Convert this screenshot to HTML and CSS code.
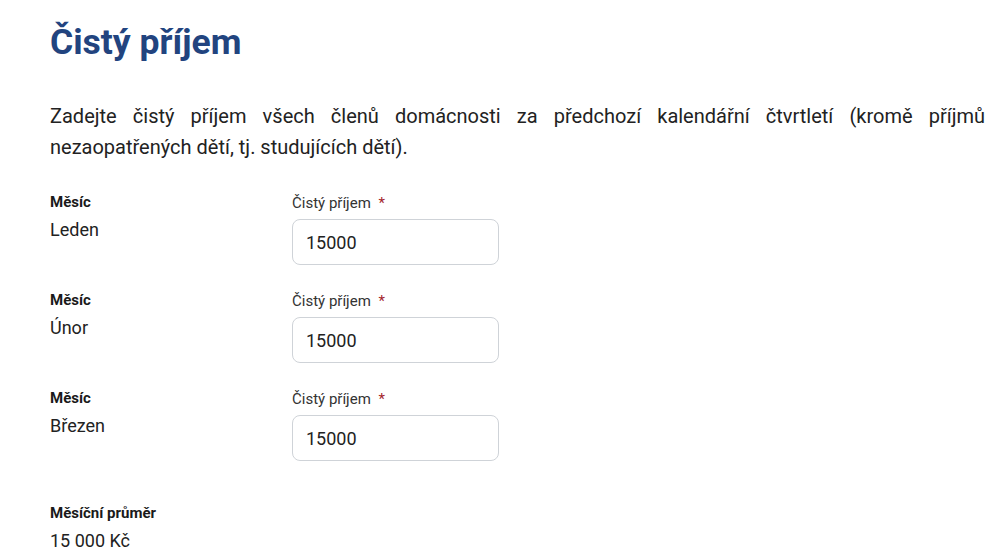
FILE: index.html
```html
<!DOCTYPE html>
<html lang="cs">
<head>
    <meta charset="UTF-8">
    <meta name="viewport" content="width=device-width, initial-scale=1.0">
    <title>Čistý příjem</title>
    <link rel="stylesheet" href="styles.css">
</head>
<body>

<div class="page">
    <h1>Čistý příjem</h1>

    <p class="intro">Zadejte čistý příjem všech členů domácnosti za předchozí kalendářní čtvrtletí (kromě příjmů nezaopatřených dětí, tj. studujících dětí).</p>

    <!-- One row per month -->
    <div class="month-row">
        <div class="month">
            <div class="field-title">Měsíc</div>
            <div class="field-value">Leden</div>
        </div>
        <div class="income">
            <label for="inc1">Čistý příjem <span class="req">*</span></label>
            <input type="text" id="inc1" value="15000">
        </div>
    </div>

    <div class="month-row">
        <div class="month">
            <div class="field-title">Měsíc</div>
            <div class="field-value">Únor</div>
        </div>
        <div class="income">
            <label for="inc2">Čistý příjem <span class="req">*</span></label>
            <input type="text" id="inc2" value="15000">
        </div>
    </div>

    <div class="month-row">
        <div class="month">
            <div class="field-title">Měsíc</div>
            <div class="field-value">Březen</div>
        </div>
        <div class="income">
            <label for="inc3">Čistý příjem <span class="req">*</span></label>
            <input type="text" id="inc3" value="15000">
        </div>
    </div>

    <div class="average">
        <div class="field-title">Měsíční průměr</div>
        <div class="field-value">15 000 Kč</div>
    </div>
</div>

</body>
</html>
```

FILE: styles.css
```css
body {
    margin: 0;
    font-family: Roboto, "Liberation Sans", Arial, sans-serif;
    color: #222;
    background: #fff;
}

.page {
    padding: 18px 20px 0 50px;
}

h1 {
    font-size: 35.5px;
    font-weight: 700;
    color: #22447f;
    margin: 0 0 35px 0;
    line-height: 48px;
}

.intro {
    font-size: 20px;
    line-height: 31px;
    text-align: justify;
    margin: 0 0 29px 0;
}

.month-row {
    display: flex;
    margin-bottom: 25px;
}

.month {
    width: 242px;
}

.field-title {
    font-size: 15px;
    font-weight: 700;
    line-height: 20px;
    color: #1a1a1a;
}

.field-value {
    font-size: 18px;
    line-height: 24px;
    margin-top: 6px;
}

.income label {
    display: block;
    font-size: 15px;
    line-height: 20px;
    color: #333;
    margin-top: 1px;
    margin-bottom: 6px;
}

.req {
    color: #a4262c;
    margin-left: 4px;
}

.income input {
    width: 207px;
    height: 46px;
    box-sizing: border-box;
    border: 1px solid #cfd3d8;
    border-radius: 8px;
    padding: 0 13px;
    font-family: inherit;
    font-size: 18px;
    color: #222;
}

.average {
    margin-top: 42px;
}
```
